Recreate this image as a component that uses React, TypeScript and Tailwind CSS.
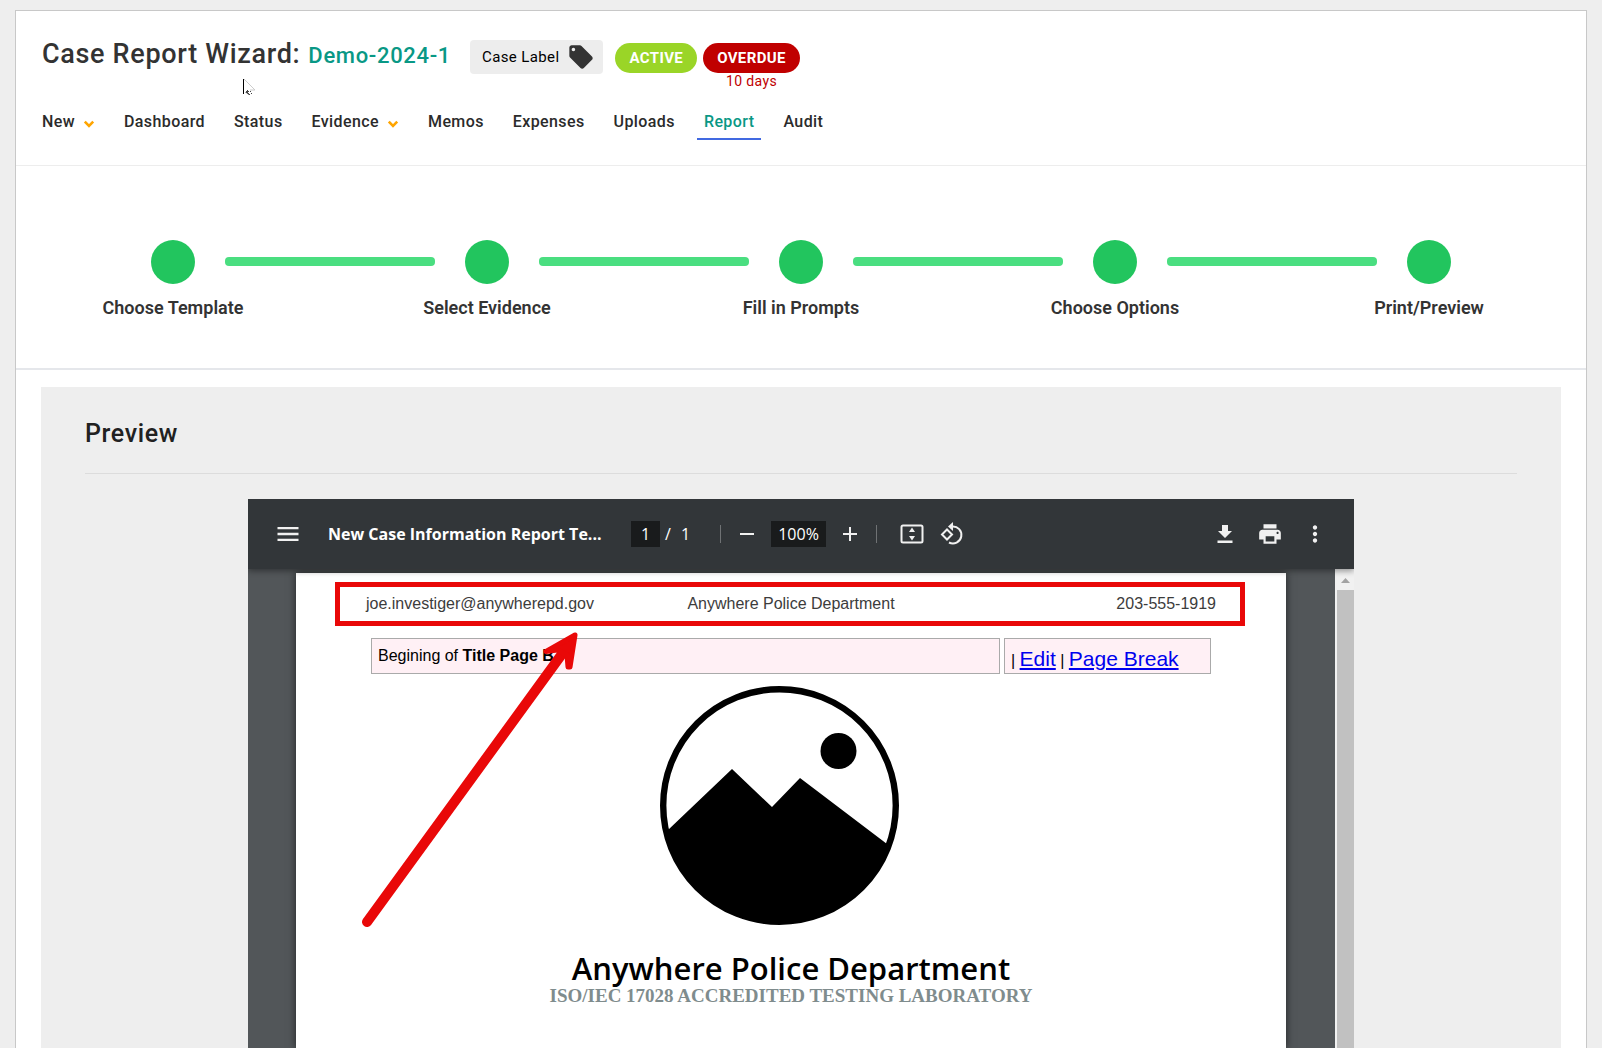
import { useState } from "react";
import type { ReactNode } from "react";
import {
  MdAdd,
  MdLocalOffer,
  MdMenu,
  MdMoreVert,
  MdPrint,
  MdRemove
} from "react-icons/md";

const NAV_ITEMS = [
  { label: "New", menu: true },
  { label: "Dashboard" },
  { label: "Status" },
  { label: "Evidence", menu: true },
  { label: "Memos" },
  { label: "Expenses" },
  { label: "Uploads" },
  { label: "Report" },
  { label: "Audit" }
];

const STEPS = [
  "Choose Template",
  "Select Evidence",
  "Fill in Prompts",
  "Choose Options",
  "Print/Preview"
];

function Chevron() {
  return (
    <svg aria-hidden="true" className="mt-1 h-2 w-3" fill="none" viewBox="0 0 12 8">
      <path d="M1.8 1.6 6 5.800l4.200-4.200" stroke="#ffa500" strokeWidth="2.600" />
    </svg>
  );
}

function Pointer() {
  return (
    <svg aria-hidden="true" className="absolute left-[226px] top-[67px] h-5 w-4" viewBox="0 0 16 20">
      <path d="M1.500 1v15" stroke="#000" />
      <path d="M2 1l11 11H8" fill="none" stroke="#ccc" />
      <path d="M3 14h1v-1h1v-1h1v1h1v1H6v1h1v1h1v1H7m1-4h1v1H8m1 1h1v1H9" fill="#444" />
    </svg>
  );
}

function CaseHeader() {
  return (
    <header className="relative border-b border-[#ededed] px-[26px] pt-6">
      <div className="flex h-[62px] items-start">
        <h1 className="mt-px flex items-baseline gap-2 text-[27px] leading-9 font-medium tracking-wide text-[#333]">
          Case Report Wizard:
          <a className="text-[22px] text-[#099885]" href="#case">Demo-2024-1</a>
        </h1>
        <button className="ml-[19px] mt-[5px] flex h-[34px] items-center gap-2 rounded-sm bg-[#ededed] pl-3 pr-2 text-[15px] tracking-wide text-black">
          Case Label
          <MdLocalOffer className="size-7 text-[#333]" />
        </button>
        <span className="ml-3 mt-2 flex h-[30px] items-center rounded-full bg-[#9ad527] px-[14px] text-[15px] font-bold tracking-wide text-white">
          ACTIVE
        </span>
        <div className="ml-[6px] mt-2 text-center">
          <span className="flex h-[30px] items-center rounded-full bg-[#c00000] px-[14px] text-[15px] font-bold tracking-wide text-white">
            OVERDUE
          </span>
          <p className="text-sm leading-4 tracking-wide text-[#c00000]">10 days</p>
        </div>
      </div>
      <Pointer />
      <nav aria-label="Case" className="flex h-[68px] items-start pt-[7px]">
        <ul className="-ml-[7px] flex gap-[15px] text-base font-medium tracking-wide text-[#2b2b2b]">
          {NAV_ITEMS.map(({ label, menu }) => (
            <li key={label}>
              <a
                className={`flex h-9 items-center gap-2 border-b-2 px-[7px] pt-px ${
                  label === "Report" ? "border-[#4169e1] text-[#099885]" : "border-transparent"
                }`}
                href={`#${label.toLowerCase()}`}
              >
                {label}
                {menu && <Chevron />}
              </a>
            </li>
          ))}
        </ul>
      </nav>
    </header>
  );
}

function Stepper() {
  return (
    <ol className="grid grid-cols-5 border-b-2 border-gray-200 pb-11 pt-[74px]">
      {STEPS.map((step, index) => (
        <li className="flex flex-col items-center" key={step}>
          <div className="flex w-full items-center gap-[30px]">
            <span className={`mb-px h-[9px] flex-1 rounded-r-[4px] ${index > 0 ? "bg-[#4ade80]" : ""}`} />
            <span className="size-11 rounded-full bg-[#22c55e]" />
            <span className={`mb-px h-[9px] flex-1 rounded-l-[4px] ${index < STEPS.length - 1 ? "bg-[#4ade80]" : ""}`} />
          </div>
          <span className="mt-2 text-lg leading-8 font-semibold text-[#333]">{step}</span>
        </li>
      ))}
    </ol>
  );
}

function ToolButton({ label, children }: { label: string; children: ReactNode }) {
  return (
    <button aria-label={label} className="flex size-7 shrink-0 items-center justify-center text-[#f1f1f1]">
      {children}
    </button>
  );
}

function ViewerToolbar() {
  const [page, setPage] = useState("1");
  const [zoom, setZoom] = useState("100%");

  return (
    <div className="relative z-10 flex h-[70px] items-center bg-[#323639] pl-[26px] pr-[25px] font-['Open_Sans',sans-serif] text-base text-white shadow-[0_2px_6px_rgba(0,0,0,0.4)]">
      <ToolButton label="Menu"><MdMenu className="size-7" /></ToolButton>
      <h3 className="ml-[26px] w-[277px] shrink-0 whitespace-nowrap font-bold">
        New Case Information Report Te...
      </h3>
      <input
        aria-label="Page number"
        className="ml-[26px] h-[26px] w-[29px] bg-[#191b1c] text-center"
        onChange={(event) => setPage(event.target.value)}
        value={page}
      />
      <span className="ml-[5px] flex gap-[10px]"><span>/</span><span>1</span></span>
      <span className="ml-[30px] h-[18px] w-px bg-[#6f7274]" />
      <span className="ml-3 flex items-center gap-[10px]">
        <ToolButton label="Zoom out"><MdRemove className="size-6" /></ToolButton>
        <input
          aria-label="Zoom level"
          className="h-[26px] w-[55px] bg-[#191b1c] text-center"
          onChange={(event) => setZoom(event.target.value)}
          value={zoom}
        />
        <ToolButton label="Zoom in"><MdAdd className="size-6" /></ToolButton>
      </span>
      <span className="ml-3 h-[18px] w-px bg-[#6f7274]" />
      <span className="ml-[21px] flex gap-3">
        <ToolButton label="Fit to page">
          <svg className="size-7" fill="none" viewBox="0 0 28 28">
            <rect height="17" rx="1.500" stroke="currentColor" strokeWidth="2" width="21" x="3.500" y="5.500" />
            <path d="M14 7.500l3 4.500h-6zM14 20.500l-3-4.500h6z" fill="currentColor" />
          </svg>
        </ToolButton>
        <ToolButton label="Rotate counterclockwise">
          <svg className="size-7" fill="none" viewBox="0 0 28 28">
            <path d="M9 9.500l5 5-5 5-5-5z" stroke="currentColor" strokeWidth="2" />
            <path d="M14 6.500a8.500 8.500 0 1 1-3 16" stroke="currentColor" strokeWidth="2" />
            <path d="M15 2v9l-5-4.500z" fill="currentColor" />
          </svg>
        </ToolButton>
      </span>
      <span className="ml-auto flex gap-[17px]">
        <ToolButton label="Download">
          <svg className="size-7" fill="currentColor" viewBox="0 0 28 28">
            <path d="M11 5h6v6h4l-7 7-7-7h4zM6.500 20.500h15V23h-15z" />
          </svg>
        </ToolButton>
        <ToolButton label="Print"><MdPrint className="size-[26px]" /></ToolButton>
        <ToolButton label="More actions"><MdMoreVert className="size-[26px]" /></ToolButton>
      </span>
    </div>
  );
}

function DepartmentLogo() {
  return (
    <svg aria-label="Department logo" className="mr-6 mt-3 size-[239px]" role="img" viewBox="0 0 239 239">
      <circle cx="119.500" cy="119.500" fill="#fff" r="116.300" stroke="#000" strokeWidth="6.400" />
      <circle cx="178.500" cy="65" r="18" />
      <path d="M8 144 72 83l40 38 28-29 87 66A115 115 0 0 1 119.500 236 115 115 0 0 1 8 144Z" />
    </svg>
  );
}

// Red callout drawn over the page header line
function Callout() {
  return (
    <>
      <span className="absolute left-[39px] top-[9px] h-[44px] w-[910px] border-[5px] border-[#e90808]" />
      <svg aria-hidden="true" className="absolute left-[60px] top-[54px] h-[310px] w-[230px]" viewBox="0 0 230 310">
        <path d="M11 295 206 27" stroke="#e90808" strokeLinecap="round" strokeWidth="10" />
        <path
          d="M219 8 190 24.500 201 23 211 28 212 40 214 40Z"
          fill="#e90808"
          stroke="#e90808"
          strokeLinejoin="round"
          strokeWidth="5"
        />
      </svg>
    </>
  );
}

function ReportPage() {
  return (
    <article className="relative flex h-full w-[990px] shrink-0 flex-col items-center bg-white font-['Liberation_Sans',sans-serif] text-base text-black shadow-[0_0_8px_rgba(0,0,0,0.6)]">
      <div className="grid w-full grid-cols-3 px-[70px] pt-[19px] text-[#3c3c3c]">
        <span>joe.investiger@anywherepd.gov</span>
        <span className="text-center">Anywhere Police Department</span>
        <span className="text-right">203-555-1919</span>
      </div>
      <div className="mt-[22px] flex w-full gap-1 px-[75px]">
        <p className="h-9 flex-1 border border-[#aaa] bg-[#fff0f5] px-[6px] leading-[34px]">
          Begining of <b>Title Page B</b>
        </p>
        <p className="h-9 w-[207px] border border-[#aaa] bg-[#fff0f5] px-[6px] pt-1 leading-8">
          |{" "}
          <a className="text-[21px] text-[#0000ee] underline" href="#edit">Edit</a>
          {" | "}
          <a className="text-[21px] text-[#0000ee] underline" href="#break">Page Break</a>
        </p>
      </div>
      <DepartmentLogo />
      <h2 className="mt-[25px] font-['Open_Sans',sans-serif] text-[31px] leading-9 font-semibold">
        Anywhere Police Department
      </h2>
      <p className="font-['Liberation_Serif',serif] text-[19px] leading-5 font-bold text-[#7f8c8d]">
        ISO/IEC 17028 ACCREDITED TESTING LABORATORY
      </p>
      <Callout />
    </article>
  );
}

function DocumentViewer() {
  return (
    <div className="mx-auto flex min-h-0 w-full max-w-[1106px] flex-1 flex-col overflow-hidden bg-[#525659]">
      <ViewerToolbar />
      <div className="flex min-h-0 flex-1">
        <div className="flex flex-1 justify-center overflow-hidden pr-px pt-1">
          <ReportPage />
        </div>
        <div className="flex w-[19px] flex-col bg-[#f1f1f1] pl-[2px]">
          <svg aria-hidden="true" className="h-[21px] w-[17px]" viewBox="0 0 17 21">
            <path d="M4 14h9l-4.500-5z" fill="#a3a3a3" />
          </svg>
          <span className="flex-1 bg-[#c1c1c1]" />
        </div>
      </div>
    </div>
  );
}

export default function App() {
  return (
    <div className="flex h-screen flex-col overflow-hidden bg-[#eee] px-[15px] pt-[10px] font-[Roboto,sans-serif]">
      <main className="flex min-h-0 flex-1 flex-col border border-b-0 border-[#c8c8c8] bg-white">
        <CaseHeader />
        <Stepper />
        <section aria-labelledby="preview" className="mx-[25px] mt-[17px] flex min-h-0 flex-1 flex-col bg-[#eee] px-11 pt-[29px]">
          <h2
            className="mb-[25px] border-b border-[#dcdcdc] pb-[21px] text-[25px] leading-9 font-medium tracking-wide text-[#212121]"
            id="preview"
          >
            Preview
          </h2>
          <DocumentViewer />
        </section>
      </main>
    </div>
  );
}
